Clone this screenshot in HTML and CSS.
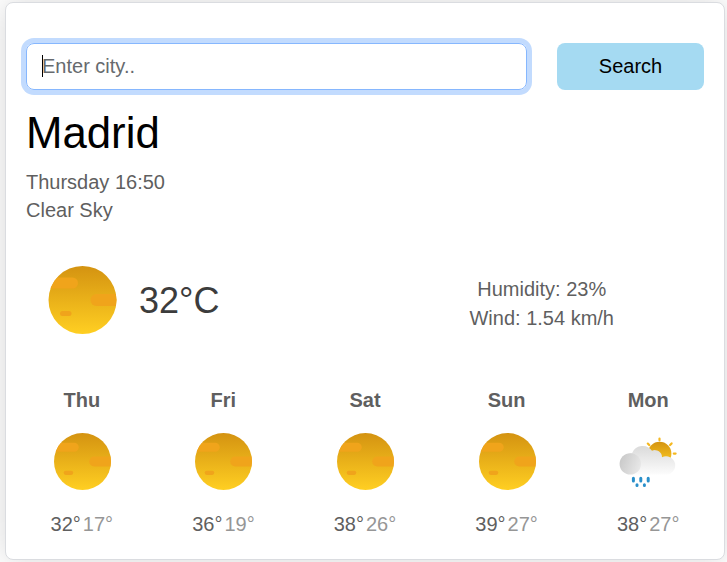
FILE: index.html
```html
<!DOCTYPE html>
<html lang="en">
<head>
<meta charset="utf-8">
<title>Weather</title>
<link rel="stylesheet" href="styles.css">
</head>
<body>
<svg class="defs" width="0" height="0" aria-hidden="true">
  <defs>
    <linearGradient id="sunFill" x1="0" y1="0" x2="0" y2="1"><stop offset="0" stop-color="#d49311"/><stop offset="1" stop-color="#ffcf22"/></linearGradient>
    <linearGradient id="cloudFill" x1="0" y1="0" x2="0" y2="1"><stop offset="0" stop-color="#dadada"/><stop offset="1" stop-color="#fcfcfc"/></linearGradient>
    <linearGradient id="puffFill" x1="0" y1="0.3" x2="1" y2="0.7"><stop offset="0" stop-color="#c9c9c9"/><stop offset="1" stop-color="#e9e9e9"/></linearGradient>
    <clipPath id="sunClip"><circle cx="34" cy="34" r="34"/></clipPath>
    <symbol id="sun" viewBox="0 0 68 68">
      <circle cx="34" cy="34" r="34" fill="url(#sunFill)"/>
      <g clip-path="url(#sunClip)" fill="#f0a41b">
        <rect x="-8" y="11.5" width="37.500" height="11" rx="5.500"/>
        <rect x="42" y="28" width="36" height="12" rx="6"/>
        <rect x="11.500" y="45" width="11.500" height="5" rx="2.500"/>
      </g>
    </symbol>
    <symbol id="rain" viewBox="0 0 75 62">
      <circle cx="49.600" cy="23.500" r="11.800" fill="url(#sunFill)"/>
      <g stroke="#f5b820" stroke-width="2.200" stroke-linecap="round">
        <path d="M49.500 8.500v1.800M61.600 13.400l-1.500 1.600M37.800 13.600l1.400 1.500M63.800 23.600h1.800"/>
      </g>
      <path d="M20 44.500A10.700 10.700 0 0 1 22 23.200A11.500 11.500 0 0 1 42 20.800A7 7 0 0 1 52 27.300A9.100 9.100 0 1 1 56 44.500Z" fill="url(#cloudFill)"/>
      <circle cx="20.300" cy="33.900" r="10.700" fill="url(#puffFill)"/>
      <g stroke="#298fca" stroke-width="3" stroke-linecap="round">
        <path d="M23.400 48.200v2.800M30.800 48.200v2.800M38.200 48.200v2.800M27 54.700v.8M34.400 54.700v.8"/>
      </g>
    </symbol>
  </defs>
</svg>
<main class="card">
  <form class="search">
    <div class="field"><span class="caret"></span>Enter city..</div>
    <button class="submit" type="button">Search</button>
  </form>
  <h1 class="city">Madrid</h1>
  <div class="summary">
    <div>Thursday 16:50</div>
    <div>Clear Sky</div>
  </div>
  <section class="current">
    <div class="now">
      <svg class="now-icon"><use href="#sun"/></svg>
      <span class="now-temp">32°C</span>
    </div>
    <div class="details">
      <div>Humidity: 23%</div>
      <div>Wind: 1.54 km/h</div>
    </div>
  </section>
  <section class="forecast">
    <div class="day"><b>Thu</b><div class="pic"><svg class="sun-icon"><use href="#sun"/></svg></div><div class="temps"><span>32°</span><span class="low">17°</span></div></div>
    <div class="day"><b>Fri</b><div class="pic"><svg class="sun-icon"><use href="#sun"/></svg></div><div class="temps"><span>36°</span><span class="low">19°</span></div></div>
    <div class="day"><b>Sat</b><div class="pic"><svg class="sun-icon"><use href="#sun"/></svg></div><div class="temps"><span>38°</span><span class="low">26°</span></div></div>
    <div class="day"><b>Sun</b><div class="pic"><svg class="sun-icon"><use href="#sun"/></svg></div><div class="temps"><span>39°</span><span class="low">27°</span></div></div>
    <div class="day"><b>Mon</b><div class="pic"><svg class="rain-icon"><use href="#rain"/></svg></div><div class="temps"><span>38°</span><span class="low">27°</span></div></div>
  </section>
</main>
</body>
</html>
```
FILE: styles.css
```css
* { box-sizing: border-box; }
body {
  margin: 0;
  padding: 2px 2px 2px 5px;
  height: 562px;
  overflow: hidden;
  background: #fff;
  color: #5f5f5f;
  font: 20px/28px "Liberation Sans", Arial, sans-serif;
}
.defs { position: absolute; }
.card {
  height: 558px;
  padding: 40px 20px 0;
  border: 1px solid #dadce0;
  border-radius: 8px;
  background: #fff;
  box-shadow: 0 0 32px rgba(0, 0, 0, 0.16);
}
.search { display: flex; gap: 30px; }
.field {
  display: flex;
  align-items: center;
  flex: 0 0 501px;
  height: 47px;
  padding: 0 0 1px 15px;
  border: 1px solid #86b7fe;
  border-radius: 8px;
  box-shadow: 0 0 0 5px #c2dbfe;
  color: #666a6e;
}
.caret { width: 1px; height: 22px; margin-right: -1px; background: #000; }
.submit {
  flex: 0 0 147px;
  height: 47px;
  padding: 0 0 1px;
  border: 0;
  border-radius: 8px;
  background: #a5daf2;
  color: #000;
  font: inherit;
}
.city {
  margin: 16px 0 0;
  color: #000;
  font-size: 43.75px;
  font-weight: 400;
  line-height: 54px;
}
.summary { margin-top: 8px; }
.current {
  display: flex;
  justify-content: space-between;
  align-items: center;
  height: 68px;
  margin-top: 42px;
  padding: 0 90px 0 22px;
}
.now { display: flex; align-items: center; gap: 22px; }
.now-icon { width: 69px; height: 68px; }
.now-temp { padding-top: 2px; color: #3c3c3c; font-size: 36px; line-height: 40px; }
.details { padding-top: 8px; line-height: 29px; text-align: center; }
.forecast {
  display: grid;
  grid-template-columns: repeat(5, 1fr);
  margin: 52px -15px 0;
}
.day { text-align: center; }
.day b { display: block; }
.pic {
  display: flex;
  justify-content: center;
  align-items: center;
  height: 61px;
  margin: 17px 0 18px;
}
.sun-icon { width: 57px; height: 57px; margin-left: 1px; }
.rain-icon { width: 75px; height: 62px; margin: -1px 2px 0 0; }
.temps { display: flex; justify-content: center; gap: 2px; }
.low { color: #969696; }
```
